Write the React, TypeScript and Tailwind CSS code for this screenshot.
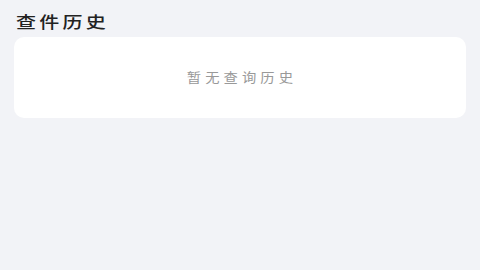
export default function App() {
  return (
    <div className="w-[480px] h-[270px] bg-[#f2f3f7] px-[14px] pt-[8px]" style={{ fontFamily: '"Noto Sans CJK SC", "Noto Sans", sans-serif' }}>
      <div className="h-[26px] flex items-center pl-[2px]">
        <span className="inline-block origin-left scale-x-[1.25] text-[16px] font-medium text-[#222222] tracking-[2.6px] leading-none">查件历史</span>
      </div>
      <div className="mt-[3px] h-[81px] bg-white rounded-[10px] flex items-center justify-center">
        <span className="inline-block scale-x-[1.1] text-[13px] text-[#999999] tracking-[3.7px] leading-none pl-[3.7px] -mt-[2px]">暂无查询历史</span>
      </div>
    </div>
  );
}
